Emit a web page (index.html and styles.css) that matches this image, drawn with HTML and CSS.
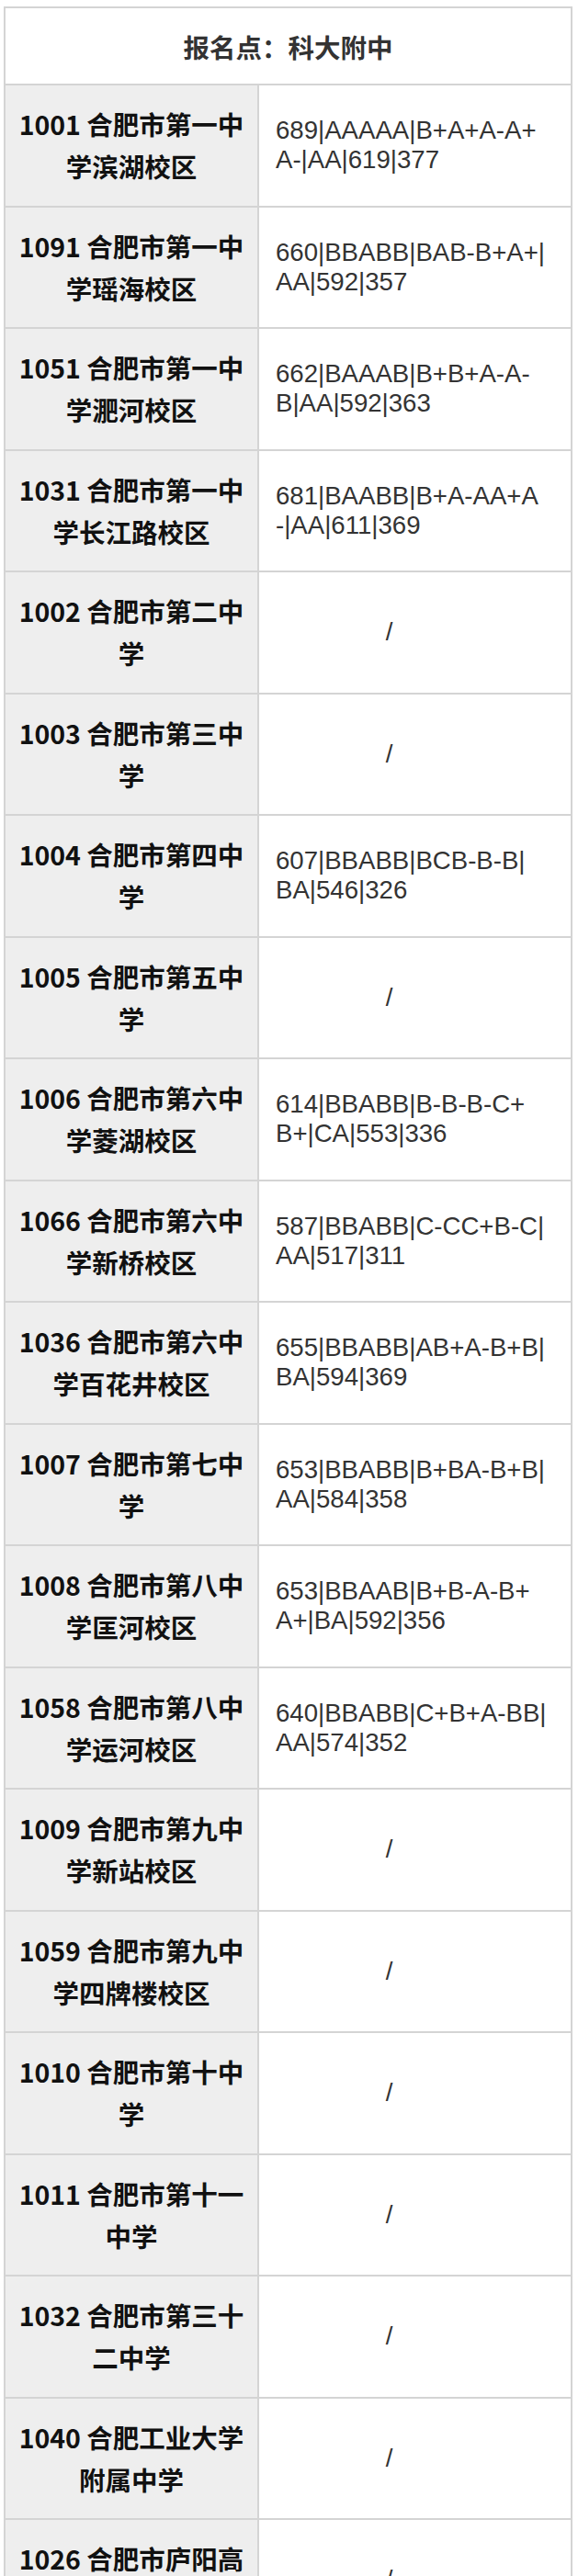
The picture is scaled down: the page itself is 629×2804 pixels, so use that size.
FILE: index.html
```html
<!DOCTYPE html>
<html lang="zh-CN">
<head>
<meta charset="utf-8">
<title>报名点：科大附中</title>
<link rel="stylesheet" href="styles.css">
</head>
<body>
<div class="sheet">
  <div class="head">报名点：科大附中</div>

  <div class="row"><div class="school">1001 合肥市第一中<br>学滨湖校区</div><div class="score">689|AAAAA|B+A+A-A+<br>A-|AA|619|377</div></div>
  <div class="row"><div class="school">1091 合肥市第一中<br>学瑶海校区</div><div class="score">660|BBABB|BAB-B+A+|<br>AA|592|357</div></div>
  <div class="row"><div class="school">1051 合肥市第一中<br>学淝河校区</div><div class="score">662|BAAAB|B+B+A-A-<br>B|AA|592|363</div></div>
  <div class="row"><div class="school">1031 合肥市第一中<br>学长江路校区</div><div class="score">681|BAABB|B+A-AA+A<br>-|AA|611|369</div></div>
  <div class="row"><div class="school">1002 合肥市第二中<br>学</div><div class="score empty">/</div></div>
  <div class="row"><div class="school">1003 合肥市第三中<br>学</div><div class="score empty">/</div></div>
  <div class="row"><div class="school">1004 合肥市第四中<br>学</div><div class="score">607|BBABB|BCB-B-B|<br>BA|546|326</div></div>
  <div class="row"><div class="school">1005 合肥市第五中<br>学</div><div class="score empty">/</div></div>
  <div class="row"><div class="school">1006 合肥市第六中<br>学菱湖校区</div><div class="score">614|BBABB|B-B-B-C+<br>B+|CA|553|336</div></div>
  <div class="row"><div class="school">1066 合肥市第六中<br>学新桥校区</div><div class="score">587|BBABB|C-CC+B-C|<br>AA|517|311</div></div>
  <div class="row"><div class="school">1036 合肥市第六中<br>学百花井校区</div><div class="score">655|BBABB|AB+A-B+B|<br>BA|594|369</div></div>
  <div class="row"><div class="school">1007 合肥市第七中<br>学</div><div class="score">653|BBABB|B+BA-B+B|<br>AA|584|358</div></div>
  <div class="row"><div class="school">1008 合肥市第八中<br>学匡河校区</div><div class="score">653|BBAAB|B+B-A-B+<br>A+|BA|592|356</div></div>
  <div class="row"><div class="school">1058 合肥市第八中<br>学运河校区</div><div class="score">640|BBABB|C+B+A-BB|<br>AA|574|352</div></div>
  <div class="row"><div class="school">1009 合肥市第九中<br>学新站校区</div><div class="score empty">/</div></div>
  <div class="row"><div class="school">1059 合肥市第九中<br>学四牌楼校区</div><div class="score empty">/</div></div>
  <div class="row"><div class="school">1010 合肥市第十中<br>学</div><div class="score empty">/</div></div>
  <div class="row"><div class="school">1011 合肥市第十一<br>中学</div><div class="score empty">/</div></div>
  <div class="row"><div class="school">1032 合肥市第三十<br>二中学</div><div class="score empty">/</div></div>
  <div class="row"><div class="school">1040 合肥工业大学<br>附属中学</div><div class="score empty">/</div></div>
  <div class="row"><div class="school">1026 合肥市庐阳高<br>级中学</div><div class="score empty">/</div></div>
</div>
</body>
</html>
```

FILE: styles.css
```css
html, body {
  margin: 0;
  padding: 0;
  background: #ffffff;
}

body {
  font-family: "Noto Sans CJK SC", "Noto Sans", sans-serif;
}

.sheet {
  margin: 7px 6px 0 4px;
  border: 2px solid #d4d4d4;
  background: #ffffff;
}

.head {
  height: 82px;
  border-bottom: 2px solid #d4d4d4;
  display: flex;
  align-items: center;
  justify-content: center;
  font-size: 28.5px;
  font-weight: 700;
  color: #333333;
}

.row {
  display: grid;
  grid-template-columns: 276px 1fr;
  height: 130.5px;
  border-bottom: 2px solid #d4d4d4;
}

.school {
  background: #eeeeee;
  border-right: 2px solid #d4d4d4;
  display: flex;
  align-items: center;
  justify-content: center;
  text-align: center;
  font-size: 28.5px;
  font-weight: 700;
  line-height: 46px;
  color: #111111;
}

.score {
  display: flex;
  align-items: center;
  padding-left: 18px;
  font-family: "Liberation Sans", Arial, sans-serif;
  font-size: 27.6px;
  font-weight: 400;
  line-height: 32px;
  color: #333333;
  white-space: nowrap;
}

.score.empty {
  justify-content: center;
  padding-left: 0;
  padding-right: 56px;
}
```
